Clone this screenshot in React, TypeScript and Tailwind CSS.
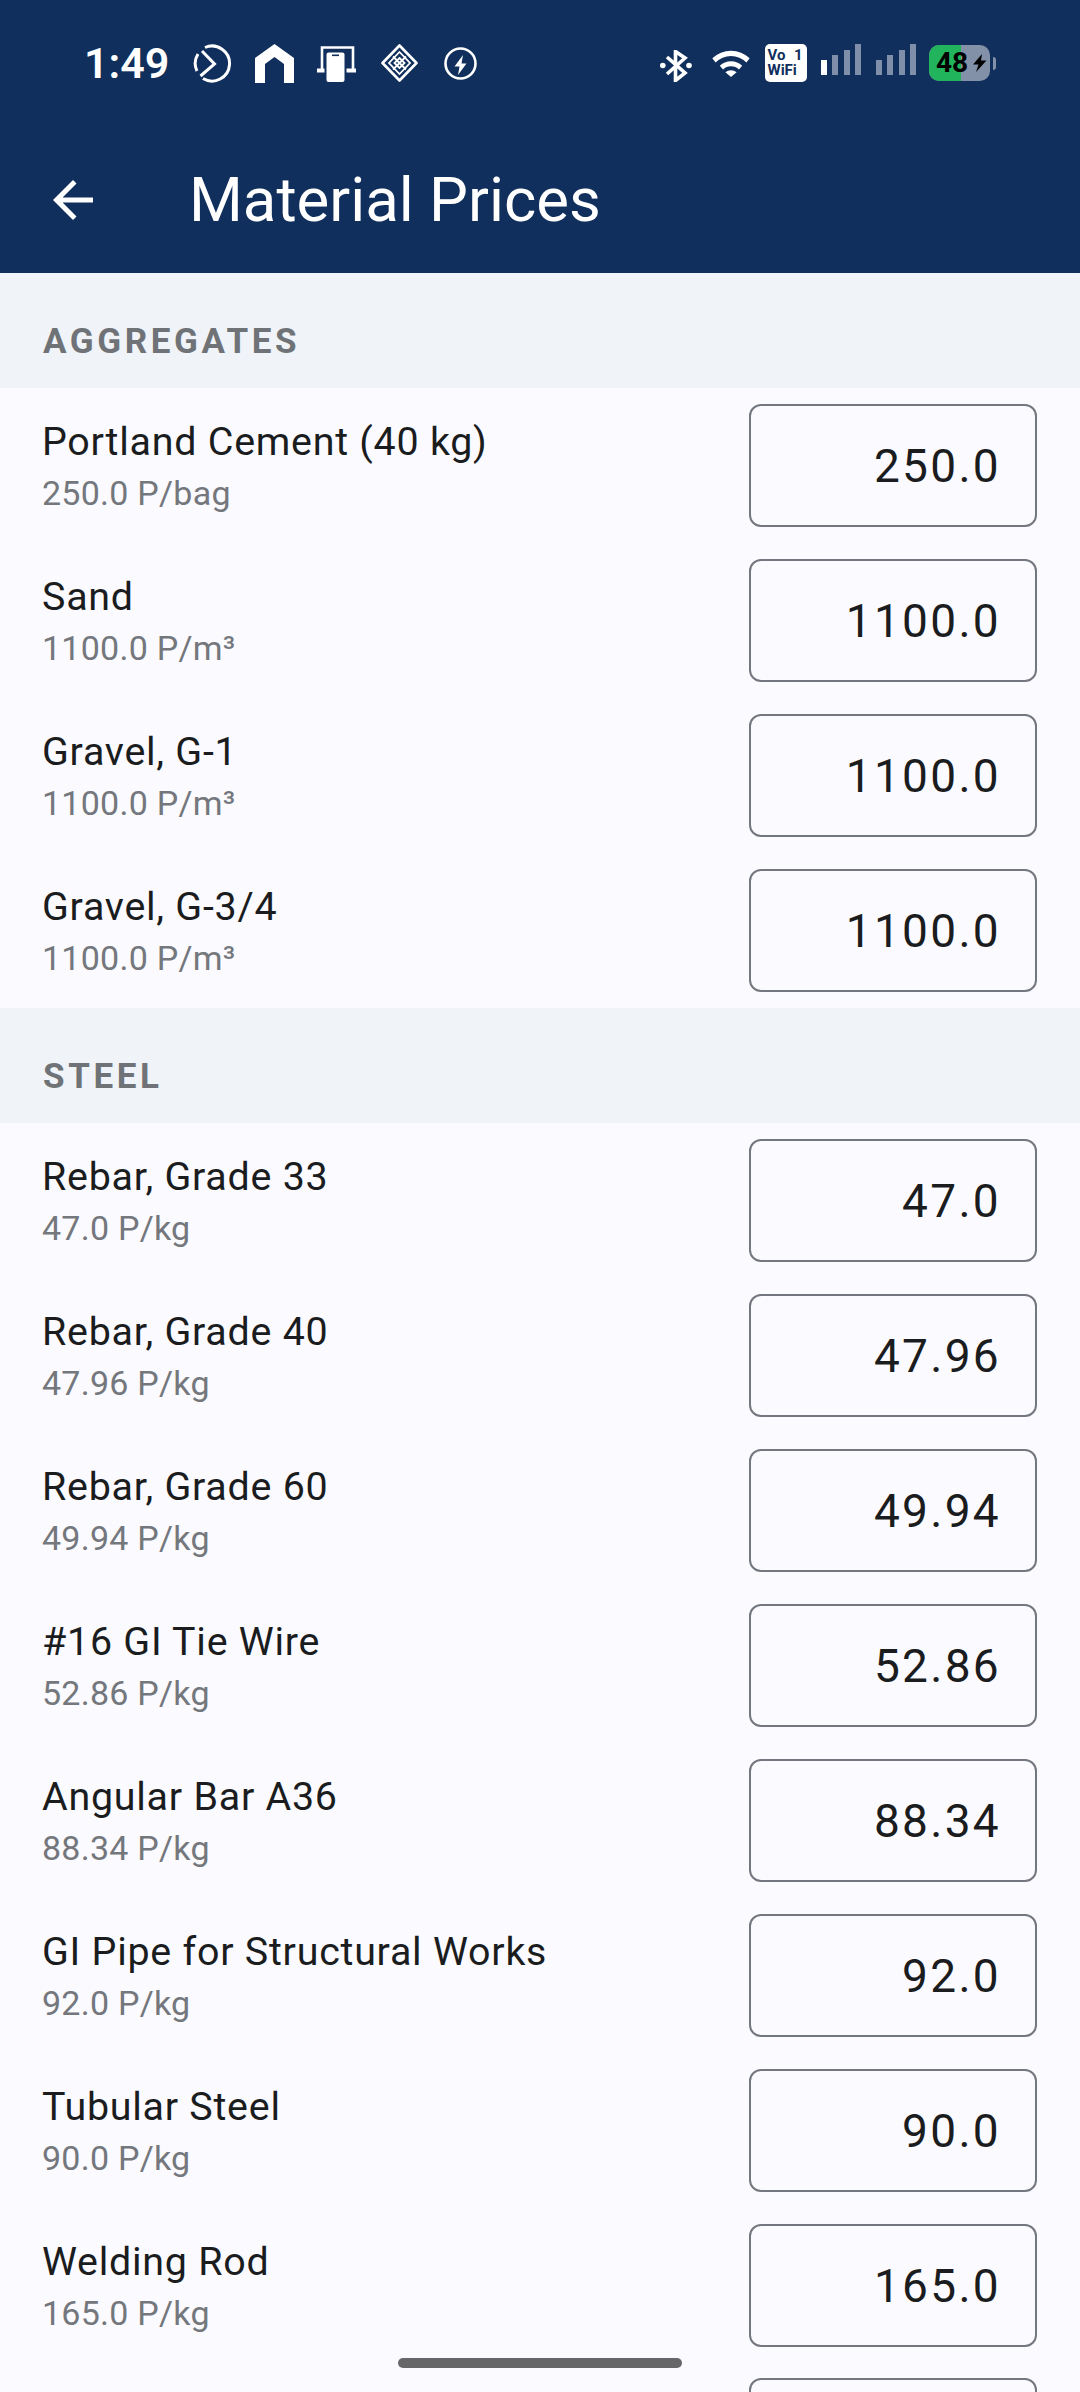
import React from 'react';

interface Material {
  name: string;
  unit: string;
  value: string;
}

const aggregates: Material[] = [
  { name: 'Portland Cement (40 kg)', unit: 'P/bag', value: '250.0' },
  { name: 'Sand', unit: 'P/m³', value: '1100.0' },
  { name: 'Gravel, G-1', unit: 'P/m³', value: '1100.0' },
  { name: 'Gravel, G-3/4', unit: 'P/m³', value: '1100.0' },
];

const steel: Material[] = [
  { name: 'Rebar, Grade 33', unit: 'P/kg', value: '47.0' },
  { name: 'Rebar, Grade 40', unit: 'P/kg', value: '47.96' },
  { name: 'Rebar, Grade 60', unit: 'P/kg', value: '49.94' },
  { name: '#16 GI Tie Wire', unit: 'P/kg', value: '52.86' },
  { name: 'Angular Bar A36', unit: 'P/kg', value: '88.34' },
  { name: 'GI Pipe for Structural Works', unit: 'P/kg', value: '92.0' },
  { name: 'Tubular Steel', unit: 'P/kg', value: '90.0' },
  { name: 'Welding Rod', unit: 'P/kg', value: '165.0' },
];

const SectionHeader = ({ title }: { title: string }) => (
  <div className="h-[115px] bg-[#f0f4f8] pl-[43px] pt-[49px] text-[35px] leading-[40px] font-bold tracking-[3.6px] text-[#6f7377]">
    {title}
  </div>
);

const MaterialRow = ({ name, unit, value }: Material) => (
  <div className="flex h-[155px] justify-between pl-[42px] pr-[43px] pt-[16px]">
    <div className="pt-[14px]">
      <div className="text-[39.4px] leading-[48px] tracking-[0.75px] text-[#1a1c1e]">{name}</div>
      <div className="mt-[6px] text-[34px] leading-[42px] tracking-[0.25px] text-[#74777c]">
        {value} {unit}
      </div>
    </div>
    <div className="flex h-[123px] w-[288px] items-center justify-end rounded-[12px] border-2 border-[#74777f] pr-[34px] pt-[2px] text-[46px] tracking-[2.3px] text-[#1a1c1e]">
      {value}
    </div>
  </div>
);

const StatusIcons = () => (
  <div className="flex items-center">
    <svg width="39" height="39" viewBox="0 0 39 39" fill="none" stroke="white" strokeWidth="3" className="ml-[8px]">
      <path d="M12 3.5A17.5 17.5 0 1 1 10 34.5" />
      <path d="M5 10A17.5 17.5 0 0 0 4 27" />
      <path d="M9 7l12.5 13L7.5 32" />
    </svg>
    <svg width="39" height="39" viewBox="0 0 39 39" fill="white" className="ml-[23px]">
      <path d="M19.5 0L39 14V39H29V20L19.5 13 10 20V39H0V14Z" />
    </svg>
    <svg width="39" height="36" viewBox="0 0 39 36" fill="none" className="ml-[23px] mt-[2px]">
      <path d="M5 23V1.5H36V23" stroke="white" strokeWidth="2.6" />
      <path d="M0 24.5H39" stroke="white" strokeWidth="4" />
      <rect x="7.5" y="5" width="22" height="31" fill="#102f5c" />
      <rect x="9.5" y="6.5" width="18" height="29.5" rx="2" fill="white" />
      <rect x="15" y="8.5" width="7" height="1.6" fill="#102f5c" />
    </svg>
    <svg width="37" height="38" viewBox="0 0 37 38" fill="none" stroke="white" className="ml-[25px]">
      <path d="M18.5 1.5L35.5 19 18.5 36.5 1.5 19Z" strokeWidth="2.6" strokeLinejoin="round" />
      <path d="M18.5 8L29 19 18.5 30 8 19ZM12 12.5L25 25.5M25 12.5L12 25.5" strokeWidth="1.8" />
      <path d="M18.5 14L23.5 19 18.5 24 13.5 19Z" strokeWidth="1.8" />
    </svg>
    <svg width="33" height="33" viewBox="0 0 33 33" fill="none" className="ml-[26px]">
      <circle cx="16.5" cy="16.5" r="15" stroke="white" strokeWidth="2.6" />
      <path d="M19 8L10.5 19.5H15.5L14 28 22.5 16.5H17.5Z" fill="white" />
    </svg>
  </div>
);

const SignalBars = ({ first }: { first: boolean }) => (
  <div className="flex h-[31px] items-end gap-[5.5px] self-start">
    {[15, 20, 25, 31].map((h, i) => (
      <div
        key={h}
        className={i === 0 && first ? 'w-[6px] bg-white' : 'w-[6px] bg-[#7f8fa9]'}
        style={{ height: h }}
      />
    ))}
  </div>
);

const SystemIcons = () => (
  <div className="flex items-center">
    <svg width="32" height="32" viewBox="0 0 32 32" fill="none" className="mt-[5px]">
      <path d="M7 7L25 23 15.5 30.5V1.5L25 8 7 24" stroke="white" strokeWidth="3.6" />
      <circle cx="2.8" cy="15.5" r="2.8" fill="white" />
      <circle cx="29" cy="15.5" r="2.8" fill="white" />
    </svg>
    <svg width="38" height="28" viewBox="0 0 40 30" fill="white" className="ml-[20px]">
      <path d="M0 10a29 29 0 0 1 40 0l-3.5 4.5a23 23 0 0 0-33 0z" />
      <path d="M8 18a17 17 0 0 1 24 0l-3.5 4a12 12 0 0 0-17 0z" />
      <path d="M14 25a9 9 0 0 1 12 0l-6 5z" />
    </svg>
    <div className="ml-[15px] flex h-[38px] w-[42px] flex-col justify-center rounded-[5px] bg-white px-[3px] text-[15px] leading-[15px] font-bold text-[#102f5c]">
      <div className="flex justify-between pr-[1px]">
        <span>Vo</span>
        <span>1</span>
      </div>
      <div>WiFi</div>
    </div>
    <div className="ml-[14px] flex h-[38px] items-end pb-[4px]">
      <SignalBars first />
    </div>
    <div className="ml-[14.5px] flex h-[38px] items-end pb-[4px]">
      <SignalBars first={false} />
    </div>
    <div className="relative ml-[13px] flex h-[36px] w-[61px] items-center overflow-hidden rounded-[10px] bg-[#8290a8]">
      <div className="absolute inset-y-0 left-0 w-[32px] bg-[#22b45c]" />
      <span className="relative ml-[7px] text-[28px] leading-none font-bold text-black">48</span>
      <svg width="15" height="18" viewBox="0 0 15 18" className="relative ml-[4px]">
        <path d="M10 0L1 10.5H6.5L4 18 14.5 6.5H9Z" fill="black" />
      </svg>
    </div>
    <div className="ml-[3px] h-[13px] w-[3px] rounded-r-sm bg-[#8290a8]" />
  </div>
);

export default function App() {
  return (
    <div className="relative h-[2392px] w-[1080px] overflow-hidden bg-[#fafaff] font-['Roboto',sans-serif]">
      <header className="h-[273px] bg-[#102f5c] text-white">
        <div className="flex h-[126px] items-center justify-between pl-[84px] pr-[84px]">
          <div className="flex items-center">
            <span className="w-[101px] text-[43px] leading-none font-semibold">1:49</span>
            <StatusIcons />
          </div>
          <SystemIcons />
        </div>
        <div className="flex h-[147px] items-center pl-[43px]">
          <svg width="60" height="60" viewBox="0 0 24 24" fill="white">
            <path d="M20 11H7.83l5.59-5.59L12 4l-8 8 8 8 1.41-1.41L7.83 13H20v-2z" />
          </svg>
          <h1 className="ml-[86px] text-[61.7px] leading-[70px] font-normal">Material Prices</h1>
        </div>
      </header>
      <SectionHeader title="AGGREGATES" />
      {aggregates.map((m) => (
        <MaterialRow key={m.name} {...m} />
      ))}
      <SectionHeader title="STEEL" />
      {steel.map((m) => (
        <MaterialRow key={m.name} {...m} />
      ))}
      <div className="ml-auto mr-[43px] mt-[15px] h-[123px] w-[288px] rounded-[12px] border-2 border-[#74777f]" />
      <div className="absolute bottom-[24px] left-[398px] h-[10px] w-[284px] rounded-full bg-[#666668]" />
    </div>
  );
}
